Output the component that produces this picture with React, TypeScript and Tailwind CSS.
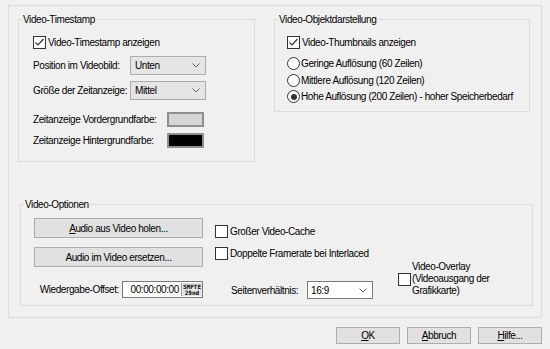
import type { ReactNode } from "react";

const Check = ({ checked = false }: { checked?: boolean }) => (
  <span className="w-[13px] h-[13px] shrink-0 border border-[#333333] bg-white flex items-center justify-center">
    {checked && (
      <svg width="11" height="11" viewBox="0 0 11 11">
        <polyline points="1.5,5.5 4,8 9.5,2" fill="none" stroke="#333333" strokeWidth="1.2" />
      </svg>
    )}
  </span>
);

const Radio = ({ checked = false }: { checked?: boolean }) => (
  <span className="w-[13px] h-[13px] shrink-0 rounded-full border border-[#333333] bg-white flex items-center justify-center">
    {checked && <span className="w-[6px] h-[6px] rounded-full bg-[#333333]" />}
  </span>
);

const Chevron = () => (
  <svg width="8" height="5" viewBox="0 0 8 5" className="shrink-0">
    <polyline points="0.5,0.5 4,4 7.5,0.5" fill="none" stroke="#606060" strokeWidth="1" />
  </svg>
);

const Group = ({ title, className, children }: { title: string; className: string; children: ReactNode }) => (
  <fieldset className={`border border-[#dcdcdc] ${className}`}>
    <legend className="ml-[3px] px-[1px] leading-[13px]">{title}</legend>
    {children}
  </fieldset>
);

const Btn = ({ children, className = "" }: { children: ReactNode; className?: string }) => (
  <button className={`bg-[#e1e1e1] border border-[#adadad] flex items-center justify-center ${className}`}>
    {children}
  </button>
);

export default function App() {
  return (
    <div className="w-[550px] h-[349px] bg-[#f0f0f0] overflow-hidden whitespace-nowrap text-[10px] tracking-[-0.4px] leading-[13px] text-black font-['Liberation_Sans',Arial,sans-serif]">
      <div className="mt-[5px] ml-[8px] w-[534px] h-[313px] border border-[#dadada]">
        <div className="flex items-start">
          {/* Video-Timestamp */}
          <Group title="Video-Timestamp" className="mt-[7px] ml-[9px] w-[237px] h-[149px]">
            <div className="pl-[14px] flex flex-col">
              <label className="mt-[10px] h-[13px] flex items-center gap-[2px]">
                <Check checked />
                <span>Video-Timestamp anzeigen</span>
              </label>
              <div className="mt-[7px] flex items-center">
                <span className="w-[97px]">Position im Videobild:</span>
                <div className="w-[76px] h-[19px] bg-[#e5e5e5] border border-[#acacac] flex items-center justify-between pl-[4px] pr-[5px]">
                  <span>Unten</span>
                  <Chevron />
                </div>
              </div>
              <div className="mt-[6px] flex items-center">
                <span className="w-[97px]">Größe der Zeitanzeige:</span>
                <div className="w-[76px] h-[19px] bg-[#e5e5e5] border border-[#acacac] flex items-center justify-between pl-[4px] pr-[5px]">
                  <span>Mittel</span>
                  <Chevron />
                </div>
              </div>
              <div className="mt-[12px] flex items-center">
                <span className="w-[134px]">Zeitanzeige Vordergrundfarbe:</span>
                <span className="w-[37px] h-[15px] border-2 border-[#8f8f8f] bg-[#d6d6d6]" />
              </div>
              <div className="mt-[6px] flex items-center">
                <span className="w-[134px]">Zeitanzeige Hintergrundfarbe:</span>
                <span className="w-[37px] h-[15px] border-2 border-[#8f8f8f] bg-black" />
              </div>
            </div>
          </Group>

          {/* Video-Objektdarstellung */}
          <Group title="Video-Objektdarstellung" className="mt-[7px] ml-[19px] w-[256px] h-[99px]">
            <div className="pl-[12px] flex flex-col">
              <label className="mt-[10px] h-[13px] flex items-center gap-[2px]">
                <Check checked />
                <span>Video-Thumbnails anzeigen</span>
              </label>
              <label className="mt-[8px] h-[13px] flex items-center gap-[1px]">
                <Radio />
                <span>Geringe Auflösung (60 Zeilen)</span>
              </label>
              <label className="mt-[4px] h-[13px] flex items-center gap-[1px]">
                <Radio />
                <span>Mittlere Auflösung (120 Zeilen)</span>
              </label>
              <label className="mt-[3px] h-[13px] flex items-center gap-[1px]">
                <Radio checked />
                <span>Hohe Auflösung (200 Zeilen) - hoher Speicherbedarf</span>
              </label>
            </div>
          </Group>
        </div>

        {/* Video-Optionen */}
        <Group title="Video-Optionen" className="mt-[36px] ml-[11px] w-[513px] h-[108px]">
          <div className="flex items-start">
            <div className="ml-[13px] w-[169px] flex flex-col">
              <Btn className="mt-[7px] h-[20px]">
                <span>
                  <span className="underline">A</span>udio aus Video holen...
                </span>
              </Btn>
              <Btn className="mt-[9px] h-[20px]">Audio im Video ersetzen...</Btn>
              <div className="mt-[14px] flex items-center justify-end gap-[3px]">
                <span>Wiedergabe-Offset:</span>
                <div className="w-[81px] h-[17px] bg-white border border-[#7a7a7a] flex items-center justify-end">
                  <span className="mr-[2px]">00:00:00:00</span>
                  <span className="h-[13px] px-[1px] bg-[#e3e3e3] border-l border-[#9a9a9a] flex flex-col items-center justify-center text-[6px] leading-[6px] tracking-normal font-bold font-['DejaVu_Sans_Mono',monospace]">
                    <span>SMPTE</span>
                    <span>29nd</span>
                  </span>
                </div>
              </div>
            </div>

            <div className="ml-[12px] w-[158px] flex flex-col">
              <label className="mt-[14px] h-[13px] flex items-center gap-[2px]">
                <Check />
                <span>Großer Video-Cache</span>
              </label>
              <label className="mt-[9px] h-[13px] flex items-center gap-[2px]">
                <Check />
                <span>Doppelte Framerate bei Interlaced</span>
              </label>
              <div className="mt-[21px] pl-[16px] flex items-center">
                <span className="w-[76px]">Seitenverhältnis:</span>
                <div className="w-[66px] h-[18px] bg-white border border-[#7a7a7a] flex items-center justify-between pl-[3px] pr-[5px]">
                  <span>16:9</span>
                  <Chevron />
                </div>
              </div>
            </div>

            <label className="mt-[50px] ml-[25px] flex items-center gap-[1px]">
              <Check />
              <span className="leading-[12px]">
                Video-Overlay
                <br />
                (Videoausgang der
                <br />
                Grafikkarte)
              </span>
            </label>
          </div>
        </Group>
      </div>

      <div className="mt-[9px] pr-[8px] flex justify-end gap-[7px]">
        <Btn className="w-[64px] h-[17px] border-[#0078d7]">
          <span>
            <span className="underline">O</span>K
          </span>
        </Btn>
        <Btn className="w-[64px] h-[17px]">
          <span>
            <span className="underline">A</span>bbruch
          </span>
        </Btn>
        <Btn className="w-[64px] h-[17px]">
          <span>
            <span className="underline">H</span>ilfe...
          </span>
        </Btn>
      </div>
    </div>
  );
}
